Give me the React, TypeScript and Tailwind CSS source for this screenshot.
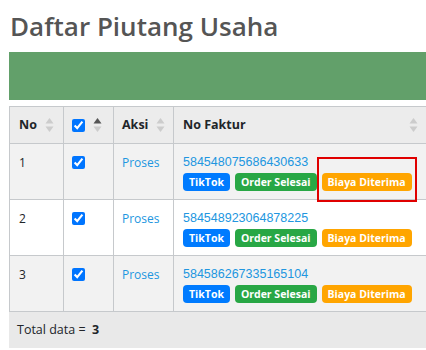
import React from "react";

type Row = { no: number; faktur: string; highlight?: boolean };

const rows: Row[] = [
  { no: 1, faktur: "584548075686430633", highlight: true },
  { no: 2, faktur: "584548923064878225" },
  { no: 3, faktur: "584586267335165104" },
];

function SortIcon({ active }: { active?: boolean }) {
  return (
    <svg width="9" height="16" viewBox="0 0 9 16" className="shrink-0">
      <path d="M4.5 1 L8.5 6.5 L0.5 6.5 Z" fill={active ? "#555555" : "#cccccc"} />
      <path d="M4.5 15 L8.5 9.5 L0.5 9.5 Z" fill="#cccccc" />
    </svg>
  );
}

function Badge({ color, children }: { color: string; children: React.ReactNode }) {
  return (
    <span className={`${color} inline-flex h-[18px] items-center whitespace-nowrap rounded-[4px] px-[6px] text-[10.5px] font-bold leading-none text-white`}>
      {children}
    </span>
  );
}

function App() {
  return (
    <div className="h-[350px] w-[426px] overflow-hidden bg-white pl-[9px] font-['Open_Sans',sans-serif] text-[#212529]">
      <h1 className="pt-[9px] pl-px text-[26px] font-semibold leading-[34px] text-[#555555]">Daftar Piutang Usaha</h1>
      <div className="mt-[9px] h-[48px] bg-[#62a06a]" />

      <div className="mt-[6px] w-[600px]">
        <table className="w-[600px] table-fixed border-collapse text-[12px]">
          <thead>
            <tr className="h-[37px] bg-[#ececec] text-[12.5px]">
              <th className="w-[54px] border border-[#c6c9cc] px-[9px] text-left">
                <div className="flex items-center justify-between">
                  <span className="font-bold">No</span>
                  <SortIcon />
                </div>
              </th>
              <th className="w-[50px] border border-[#c6c9cc] pl-[8px] pr-[6px] text-left">
                <div className="flex items-center gap-[8px]">
                  <input type="checkbox" checked readOnly className="m-0 h-[13px] w-[13px]" />
                  <SortIcon active />
                </div>
              </th>
              <th className="w-[60px] border border-[#c6c9cc] px-[8px] text-left">
                <div className="flex items-center justify-between">
                  <span className="font-bold">Aksi</span>
                  <SortIcon />
                </div>
              </th>
              <th className="w-[253px] border border-[#c6c9cc] pl-[9px] pr-[8px] text-left">
                <div className="flex items-center justify-between">
                  <span className="font-bold">No Faktur</span>
                  <SortIcon />
                </div>
              </th>
              <th className="border border-[#c6c9cc]" />
            </tr>
          </thead>
          <tbody>
            {rows.map((r, i) => (
              <tr key={r.no} className={`h-[56px] ${i % 2 === 0 ? "bg-[#f2f2f2]" : "bg-white"}`}>
                <td className="border border-[#c6c9cc] px-[9px] pt-[10px] align-top leading-[17px]">{r.no}</td>
                <td className="border border-[#c6c9cc] pl-[8px] pt-[12px] align-top">
                  <input type="checkbox" checked readOnly className="m-0 block h-[13px] w-[13px]" />
                </td>
                <td className="border border-[#c6c9cc] px-[8px] pt-[10px] align-top leading-[17px] text-[#2196e0]">Proses</td>
                <td className="border border-[#c6c9cc] pl-[9px] pt-[10px] pb-[5px] align-top">
                  <div className="font-['Liberation_Sans',sans-serif] text-[12.5px] leading-[17px] text-[#2196e0]">{r.faktur}</div>
                  <div className="mt-[2px] flex items-center gap-[5px]">
                    <Badge color="bg-[#007bff]">TikTok</Badge>
                    <Badge color="bg-[#28a745]">Order Selesai</Badge>
                    <span className="relative inline-flex">
                      <Badge color="bg-[#ffa500]">Biaya Diterima</Badge>
                      {r.highlight && (
                        <span className="absolute -top-[16px] -bottom-[11px] -left-[5px] -right-[5px] border-2 border-[#e00000]" />
                      )}
                    </span>
                  </div>
                </td>
                <td className="border border-[#c6c9cc]" />
              </tr>
            ))}
          </tbody>
        </table>
        <div className="flex h-[36px] items-center bg-[#e9e9e9] pl-[8px] text-[12.5px]">
          Total data =&nbsp;&nbsp;<span className="font-bold">3</span>
        </div>
      </div>
    </div>
  );
}

export default App;
